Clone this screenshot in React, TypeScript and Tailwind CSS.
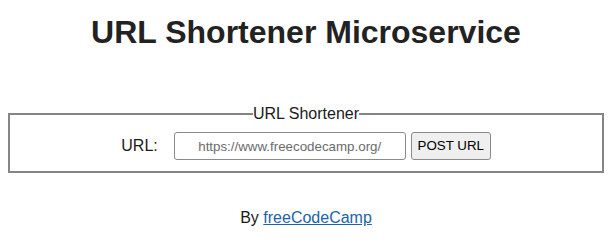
import React from 'react';

const App: React.FC = () => {
  return (
    <div className="min-h-[250px] bg-white px-2 font-['Liberation_Sans',Arial,sans-serif] text-[16px] text-[#222]">
      <h1 className="pt-[14px] text-center text-[32px] font-bold leading-[37px] text-[#222]">
        URL Shortener Microservice
      </h1>

      <form className="mt-[54px]" onSubmit={(e) => e.preventDefault()}>
        <fieldset className="border-2 border-[#858585] px-3 pt-[9px] pb-[11px]">
          <legend className="mx-auto px-0 text-[16px] leading-[18px] text-[#1a1a1a]">URL Shortener</legend>
          <div className="flex items-center justify-center">
            <label htmlFor="url_input" className="mr-4 text-[16px] text-[#1a1a1a]">
              URL:
            </label>
            <input
              id="url_input"
              type="text"
              name="url"
              placeholder="https://www.freecodecamp.org/"
              className="h-[28px] w-[232px] rounded-[3px] border border-[#8a8a8a] bg-white px-2 text-center text-[13.33px] text-[#222] placeholder:text-[#6b6b6b]"
            />
            <button
              type="submit"
              className="ml-[5px] h-[28px] w-[80px] rounded-[3px] border border-[#8a8a8a] bg-[#efefef] text-[13.33px] text-black"
            >
              POST URL
            </button>
          </div>
        </fieldset>
      </form>

      <p className="mt-[36px] text-center leading-[18px] text-[#1a1a1a]">
        By{' '}
        <a href="#" className="text-[#2063a8] underline">
          freeCodeCamp
        </a>
      </p>
    </div>
  );
};

export default App;
